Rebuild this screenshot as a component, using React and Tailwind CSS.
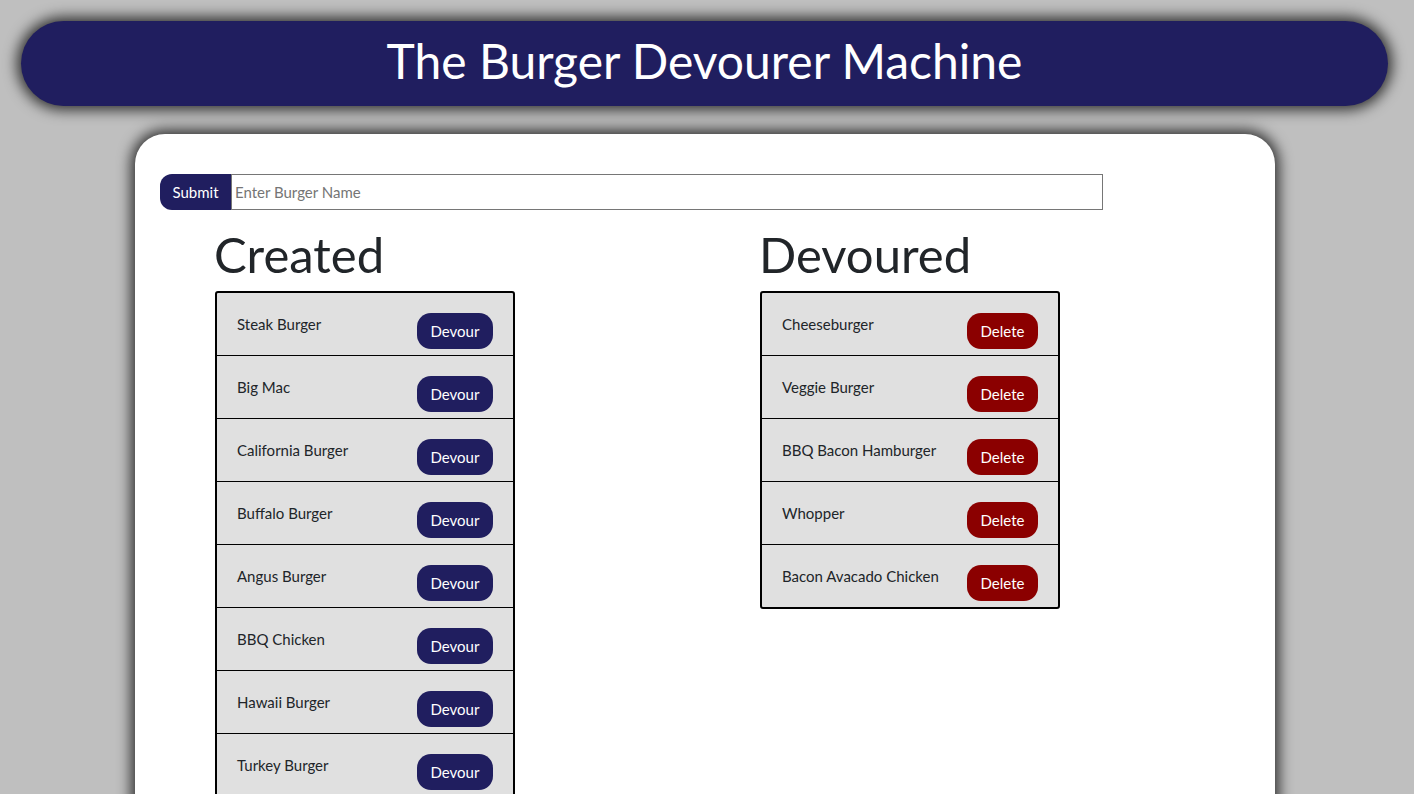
import React from "react";

const created = ["Steak Burger","Big Mac","California Burger","Buffalo Burger","Angus Burger","BBQ Chicken","Hawaii Burger","Turkey Burger"];
const devoured = ["Cheeseburger","Veggie Burger","BBQ Bacon Hamburger","Whopper","Bacon Avacado Chicken"];

function List({ items, label, color, btnW }) {
  return (
    <div className="w-[300px] border-2 border-black rounded-[3px] bg-[#e0e0e0]">
      {items.map((n, i) => (
        <div key={n} className={"flex justify-between items-start px-[20px] pt-[20px] " + (i < items.length - 1 ? "h-[63px] border-b border-black" : "h-[62px]")}>
          <span className="text-[15px] leading-[22px] text-[#212529]">{n}</span>
          <button className={"h-[36px] rounded-[14px] text-white text-[15px] leading-none pt-[1px] " + btnW + " " + color}>{label}</button>
        </div>
      ))}
    </div>
  );
}

export default function App() {
  return (
    <div className="min-h-[794px] bg-[#bfbfbf] overflow-hidden" style={{ fontFamily: "Lato, 'Noto Sans', sans-serif" }}>
      <div className="pt-[21px] px-[21px]">
        <header className="h-[85px] mr-[5px] rounded-full bg-[#201e5f] shadow-[0_0_14px_4px_rgba(0,0,0,0.75)] flex items-center justify-center">
          <h1 className="text-white text-[48px] leading-none pb-[6px]">The Burger Devourer Machine</h1>
        </header>
      </div>
      <main className="mt-[28px] ml-[135px] w-[1140px] h-[700px] bg-white rounded-t-[30px] shadow-[0_0_14px_4px_rgba(0,0,0,0.75)] pt-[40px] pl-[25px]">
        <div className="flex w-[943px] h-[36px]">
          <button className="w-[71px] h-full bg-[#201e5f] text-white text-[15px] rounded-l-[12px]">Submit</button>
          <input className="flex-1 h-full border border-[#767676] px-[3px] text-[15px] placeholder:text-[#757575] outline-none" placeholder="Enter Burger Name" />
        </div>
        <div className="flex pl-[55px] mt-[20px]">
          <section className="w-[545px]">
            <h2 className="text-[49px] leading-[49px] text-[#212529] mb-[12px] -ml-[1px]">Created</h2>
            <List items={created} label="Devour" color="bg-[#201e5f]" btnW="w-[76px]" />
          </section>
          <section>
            <h2 className="text-[49px] leading-[49px] text-[#212529] mb-[12px] -ml-[1px]">Devoured</h2>
            <List items={devoured} label="Delete" color="bg-[#8b0000]" btnW="w-[71px]" />
          </section>
        </div>
      </main>
    </div>
  );
}
